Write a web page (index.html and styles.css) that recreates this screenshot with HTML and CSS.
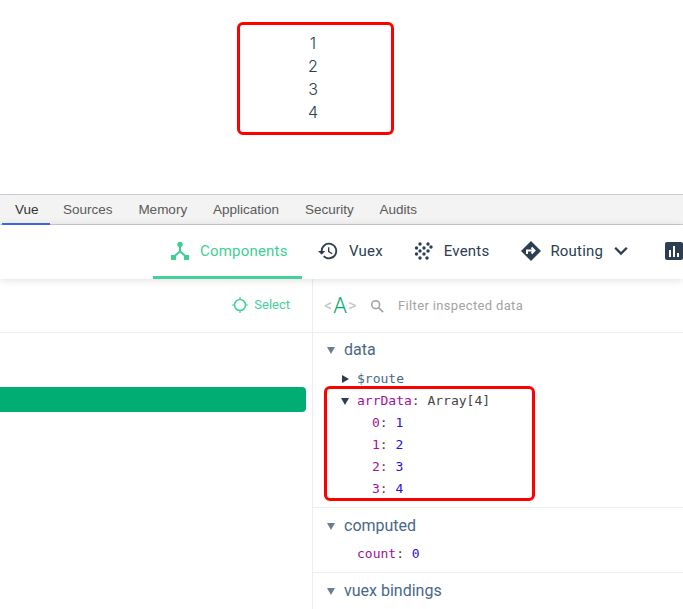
FILE: index.html
```html
<!DOCTYPE html>
<html lang="en">
<head>
<meta charset="utf-8">
<title>Vue devtools</title>
<link rel="stylesheet" href="styles.css">
</head>
<body>
<section class="preview">
  <div class="preview-box">
    <div>1</div><div>2</div><div>3</div><div>4</div>
  </div>
</section>
<nav class="tabs">
  <span class="tab active">Vue</span>
  <span class="tab">Sources</span>
  <span class="tab">Memory</span>
  <span class="tab">Application</span>
  <span class="tab">Security</span>
  <span class="tab">Audits</span>
</nav>
<header class="vuebar">
  <a class="vbtn current">
    <svg class="vicon" viewBox="0 0 20 20"><circle cx="10" cy="3.5" r="2.7" fill="currentColor"/><path d="M10 5v6M10 10.5L4 15.5M10 10.5L16 15.5" stroke="currentColor" stroke-width="2" fill="none"/><rect x="1" y="14" width="5" height="5" fill="currentColor"/><rect x="14" y="14" width="5" height="5" fill="currentColor"/></svg>
    <span>Components</span>
  </a>
  <a class="vbtn">
    <svg class="vicon wide" viewBox="0 0 24 24"><path fill="currentColor" d="M13 3a9 9 0 0 0-9 9H1l3.9 3.9.1.1L9 12H6a7 7 0 1 1 2.05 4.95L6.63 18.37A9 9 0 1 0 13 3zm-1 5v5l4.28 2.54.72-1.21-3.5-2.08V8z"/></svg>
    <span>Vuex</span>
  </a>
  <a class="vbtn">
    <svg class="vicon" viewBox="0 0 20 20" fill="currentColor"><circle cx="6" cy="3" r="1.7"/><circle cx="14" cy="3" r="1.7"/><circle cx="2.5" cy="7" r="1.7"/><circle cx="10" cy="7" r="1.7"/><circle cx="17" cy="6" r="1.7"/><circle cx="6" cy="10" r="1.7"/><circle cx="14" cy="10" r="1.7"/><circle cx="2.5" cy="13" r="1.7"/><circle cx="10" cy="13" r="1.7"/><circle cx="6" cy="17" r="1.7"/><circle cx="13" cy="17" r="1.7"/></svg>
    <span>Events</span>
  </a>
  <a class="vbtn routing">
    <svg class="vicon" viewBox="0 0 20 20"><path fill="currentColor" d="M10 0l10 10-10 10L0 10z"/><path d="M6 13V9.5h7M10.5 6.5l3 3-3 3" stroke="#fff" stroke-width="2" fill="none"/></svg>
    <span>Routing</span>
    <svg class="chev" viewBox="0 0 12 8"><path d="M1 1.2l5 5 5-5" stroke="currentColor" stroke-width="2" fill="none"/></svg>
  </a>
  <svg class="perf" viewBox="0 0 18 18"><rect width="18" height="18" rx="2" fill="currentColor"/><path d="M4 8h2v7H4zM8 4h2v11H8zM12 11h2v4h-2z" fill="#fff"/></svg>
</header>
<main class="split">
  <section class="left">
    <div class="left-toolbar">
      <a class="select">
        <svg class="target" viewBox="0 0 16 16"><circle cx="8" cy="8" r="5.5" fill="none" stroke="currentColor" stroke-width="1.6"/><path d="M8 0v2.5M8 13.5V16M0 8h2.5M13.5 8H16" stroke="currentColor" stroke-width="1.2"/></svg>
        <span>Select</span>
      </a>
    </div>
    <div class="tree">
      <div class="tree-row"></div>
    </div>
  </section>
  <section class="right">
    <div class="filter">
      <span class="case"><i>&lt;</i><b>A</b><i>&gt;</i></span>
      <svg class="search" viewBox="0 0 16 16"><circle cx="6.5" cy="6.5" r="4.5" fill="none" stroke="currentColor" stroke-width="1.8"/><path d="M10 10l5 5" stroke="currentColor" stroke-width="2"/></svg>
      <span class="placeholder">Filter inspected data</span>
    </div>
    <div class="group group-data">
      <h3 class="gtitle"><span class="tri"></span>data</h3>
      <div class="prop first"><span class="arrow right-arrow"></span><span class="route">$route</span></div>
      <div class="prop"><span class="arrow down-arrow"></span><span class="key">arrData</span><span class="colon">:</span> <span class="type">Array[4]</span></div>
      <div class="prop sub"><span class="key">0</span><span class="colon">:</span> <span class="num">1</span></div>
      <div class="prop sub"><span class="key">1</span><span class="colon">:</span> <span class="num">2</span></div>
      <div class="prop sub"><span class="key">2</span><span class="colon">:</span> <span class="num">3</span></div>
      <div class="prop sub"><span class="key">3</span><span class="colon">:</span> <span class="num">4</span></div>
      <div class="annot"></div>
    </div>
    <div class="group group-computed">
      <h3 class="gtitle"><span class="tri"></span>computed</h3>
      <div class="prop first"><span class="key">count</span><span class="colon">:</span> <span class="num">0</span></div>
    </div>
    <div class="group group-vuex">
      <h3 class="gtitle"><span class="tri"></span>vuex bindings</h3>
    </div>
  </section>
</main>
</body>
</html>
```
FILE: styles.css
```css
* { box-sizing: border-box; }
html, body { margin: 0; padding: 0; height: 100%; overflow: hidden; background: #fff; }
body { width: 683px; height: 609px; font-family: Roboto, sans-serif; color: #2c3e50; }

.preview { height: 194px; padding: 22px 0 0 237px; }
.preview-box {
  width: 157px; height: 113px;
  border: 3px solid #f00; border-radius: 6px;
  padding-top: 7px;
  padding-right: 5px;
  text-align: center;
  font: 300 16px/23px Inter, sans-serif;
  color: #2c3e50;
}

.tabs {
  height: 31px;
  display: flex;
  background: #f3f3f3;
  border-top: 1px solid #ccc;
  border-bottom: 1px solid #ccc;
  padding-left: 2px;
  font: 13.5px/29px "Liberation Sans", sans-serif;
  color: #5a5a5a;
}
.tab { padding: 0 12.85px 0 13px; height: 30px; flex: none; }
.tab.active { color: #333; border-bottom: 2px solid #3b6fe0; width: 48px; }

.vuebar {
  height: 54px;
  display: flex;
  align-items: flex-start;
  padding-left: 153px;
  font: 15px/52px Roboto, sans-serif;
  letter-spacing: .2px;
  color: #2c3e50;
  box-shadow: 0 1px 8px rgba(0,0,0,.13);
  position: relative;
}
.vbtn { display: flex; flex: none; align-items: center; gap: 10px; height: 54px; padding: 0 16px 3px 15px; }
.vbtn.current { color: #3ecf92; border-bottom: 3px solid #44d19b; width: 149px; padding: 0 0 0 17px; }
.vicon { width: 20px; height: 20px; flex: none; }
.vicon.wide { width: 22px; height: 22px; }
.chev { width: 14px; height: 10px; margin-left: 2px; }
.routing { gap: 9px; padding-left: 16px; }
.perf { width: 18px; height: 18px; margin: 17px 0 0 21px; flex: none; color: #2c3e50; }

.split { display: flex; height: 331px; }
.left { width: 313px; flex: none; border-right: 1px solid #eee; }
.left-toolbar {
  height: 54px;
  border-bottom: 1px solid #eee;
  display: flex;
  justify-content: flex-end;
  align-items: center;
  padding: 0 22px 2px 0;
  font-size: 13px;
  color: #44d19b;
}
.select { display: flex; align-items: center; gap: 6px; }
.target { width: 16px; height: 16px; }
.tree { padding-top: 54px; }
.tree-row { height: 25px; width: 306px; background: #00ad72; border-radius: 0 4px 4px 0; }

.right { flex: 1; min-width: 0; }
.filter {
  height: 54px;
  border-bottom: 1px solid #eee;
  display: flex;
  align-items: center;
  padding-left: 11px;
}
.case { display: flex; align-items: center; width: 33px; gap: 1px; }
.case i { font-style: normal; color: #c4c4c4; font-size: 16px; flex: none; }
.case b { font-weight: 300; color: #00ad72; font-size: 22px; flex: none; }
.search { width: 14px; height: 14px; color: #a3a3a3; margin-left: 13px; }
.placeholder { font-size: 13px; color: #a3a3a3; margin-left: 14px; letter-spacing: .35px; }

.group { border-bottom: 1px solid #eee; padding: 5px 0 0 14px; position: relative; }
.group-data { height: 175px; }
.group-computed { height: 65px; padding-top: 6px; }
.group-vuex { border: 0; padding-top: 6px; }
.gtitle {
  margin: 0; display: flex; align-items: center;
  font: 400 16px/23px Roboto, sans-serif;
  color: #486887;
  height: 23px;
}
.tri {
  width: 0; height: 0; margin-right: 9px; margin-top: 2px;
  border-left: 4.5px solid transparent; border-right: 4.5px solid transparent;
  border-top: 7px solid #6a7f94;
}
.prop {
  font: 13px/22px "DejaVu Sans Mono", monospace;
  height: 22px;
  padding-left: 30px;
  position: relative;
  color: #444;
  white-space: pre;
}
.prop.first { margin-top: 7px; }
.group-computed .prop.first { margin-top: 6px; }
.prop.sub { padding-left: 45px; }
.arrow { position: absolute; top: 7px; width: 0; height: 0; }
.right-arrow { border-top: 4.5px solid transparent; border-bottom: 4.5px solid transparent; border-left: 7px solid #2c3e50; left: 15px; }
.down-arrow { border-left: 4.5px solid transparent; border-right: 4.5px solid transparent; border-top: 7px solid #2c3e50; top: 8px; left: 14px; }
.route { color: #486887; }
.key { color: #a0109a; }
.colon { color: #444; }
.type { color: #444; }
.num { color: #2a10d8; }
.annot {
  position: absolute; left: 11px; top: 53px;
  width: 211px; height: 115px;
  border: 3px solid #f00; border-radius: 6px;
}
```
